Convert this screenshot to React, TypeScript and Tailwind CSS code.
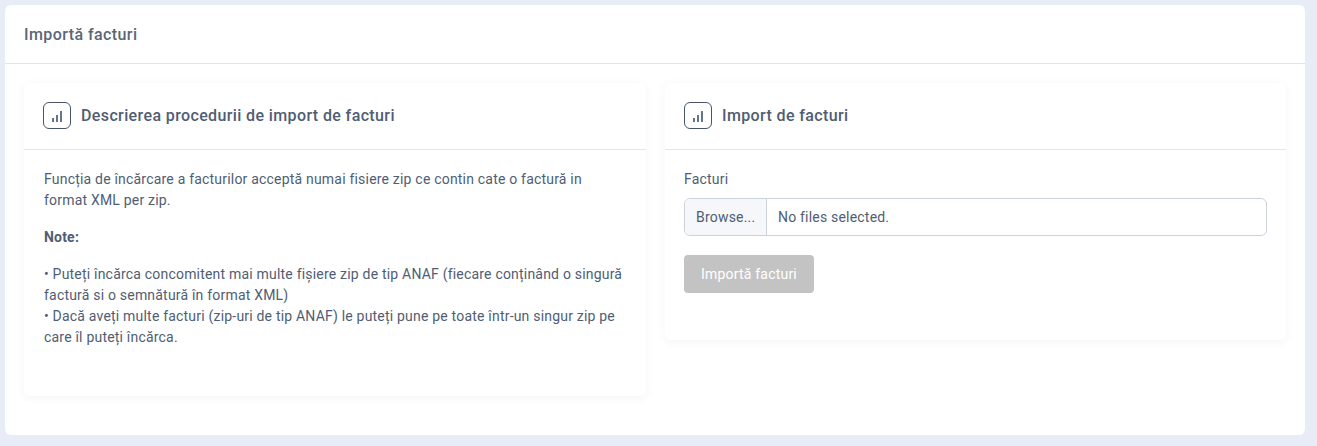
const font = "font-['Roboto',sans-serif]";

const ChartIcon = () => (
  <div className="flex h-[27px] w-[28px] shrink-0 items-center justify-center rounded-[6px] border border-[#475569] bg-white">
    <svg width="12" height="12" viewBox="0 0 12 12" className="mt-[1px]">
      <rect x="1" y="8" width="2" height="4" fill="#64748b" />
      <rect x="5" y="5" width="2" height="7" fill="#64748b" />
      <rect x="9" y="1" width="2" height="11" fill="#64748b" />
    </svg>
  </div>
);

const CardHeader = ({ title }: { title: string }) => (
  <div className="flex h-[67px] items-center gap-[10px] border-b border-[#e2e5ea] px-[19px] pb-[1px]">
    <ChartIcon />
    <h3 className="text-[16px] font-medium tracking-[0.38px] text-[#4f5d73]">{title}</h3>
  </div>
);

export default function App() {
  return (
    <div className={`${font} h-[446px] overflow-hidden bg-[#e8ecf6] pt-[5px] pr-[12px] pl-[5px] text-[14px] leading-[21px] tracking-[0.2px] text-[#4f5d73]`}>
      <div className="h-[430px] rounded-[6px] bg-white">
        <div className="flex h-[59px] items-center border-b border-[#e2e5ea] px-[19px]">
          <h2 className="text-[16px] font-medium tracking-[0.42px] text-[#5a6675]">Importă facturi</h2>
        </div>
        <div className="flex items-start gap-[19px] pt-[19px] pr-[19px] pl-[19px]">
          <div className="h-[313px] w-[622px] rounded-[6px] bg-white shadow-[0_2px_10px_rgba(40,50,90,0.05)]">
            <CardHeader title="Descrierea procedurii de import de facturi" />
            <div className="px-[20px] pt-[19px]">
              <p>Funcția de încărcare a facturilor acceptă numai fisiere zip ce contin cate o factură in format XML per zip.</p>
              <p className="mt-[16px] font-bold">Note:</p>
              <p className="mt-[16px]">
                • Puteți încărca concomitent mai multe fișiere zip de tip ANAF (fiecare conținând o singură factură si o semnătură în format XML)
                <br />
                • Dacă aveți multe facturi (zip-uri de tip ANAF) le puteți pune pe toate într-un singur zip pe care îl puteți încărca.
              </p>
            </div>
          </div>
          <div className="h-[257px] w-[621px] rounded-[6px] bg-white shadow-[0_2px_10px_rgba(40,50,90,0.05)]">
            <CardHeader title="Import de facturi" />
            <div className="px-[19px] pt-[19px]">
              <label className="block">Facturi</label>
              <div className="mt-[8px] flex h-[38px] items-stretch overflow-hidden rounded-[6px] border border-[#cbd2da]">
                <div className="flex w-[82px] items-center border-r border-[#cbd2da] bg-[#f5f7fa] pl-[11px]">Browse...</div>
                <div className="flex items-center px-[11px]">No files selected.</div>
              </div>
              <button className="mt-[19px] h-[38px] w-[130px] rounded-[4px] bg-[#c4c3c4] text-[14px] text-white opacity-100">Importă facturi</button>
            </div>
          </div>
        </div>
      </div>
    </div>
  );
}
